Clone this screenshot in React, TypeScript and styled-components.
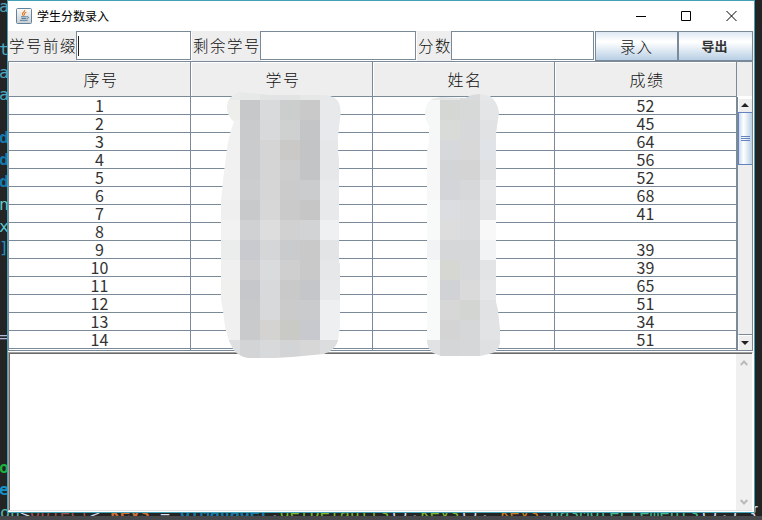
import React from 'react';
import styled, { createGlobalStyle } from 'styled-components';

const line = '#7a8a99';
const cjk = '"Noto Sans CJK SC", sans-serif';

const GlobalStyle = createGlobalStyle`
  * { box-sizing: border-box; }
  body { margin: 0; overflow: hidden; background: #242424; }
`;

const Desktop = styled.main`
  position: relative;
  width: 762px;
  height: 520px;
  overflow: hidden;
  padding-left: 7px;
  background: linear-gradient(#242424 0 516px, #47484b 516px);
  font-family: ${cjk};
`;

const CodeText = styled.span<{ $x: number; $y: number; $color: string; $bold?: boolean }>`
  position: absolute;
  left: ${p => p.$x}px;
  top: ${p => p.$y}px;
  font: ${p => (p.$bold ? 'bold' : 'normal')} 16.6px/22px "DejaVu Sans Mono", monospace;
  color: ${p => p.$color};
  white-space: pre;
`;

const CodeLine = styled.div`
  position: absolute;
  left: 0;
  top: 502px;
  width: 762px;
  height: 14px;
  overflow: hidden;
  font: 16.6px/22px "DejaVu Sans Mono", monospace;
  white-space: pre;
`;

const Token = styled.span<{ $color: string; $bold?: boolean }>`
  color: ${p => p.$color};
  font-weight: ${p => (p.$bold ? 'bold' : 'normal')};
`;

const Window = styled.section`
  position: relative;
  display: flex;
  flex-direction: column;
  width: 748px;
  height: 513px;
  border: 1px solid #43a0b5;
  background: #fff;
`;

const TitleBar = styled.header`
  display: flex;
  align-items: center;
  height: 30px;
  flex: none;
  padding: 0 0.5px 0 8px;
  background: #fff;
`;

const Title = styled.h1`
  flex: 1;
  margin: 0 0 0 5px;
  font-size: 12px;
  line-height: 18px;
  font-weight: 400;
  color: #000;
`;

const WindowButton = styled.button`
  display: flex;
  align-items: center;
  justify-content: center;
  width: 45px;
  height: 29px;
  padding: 0;
  border: 0;
  background: transparent;
`;

const Toolbar = styled.div`
  display: flex;
  height: 30px;
  flex: none;
  background: #eee;
`;

const FieldLabel = styled.label<{ $width: number }>`
  width: ${p => p.$width}px;
  padding-left: 1px;
  font-size: 15.5px;
  font-weight: 300;
  letter-spacing: 1.5px;
  line-height: 29px;
  white-space: nowrap;
  color: #111;
`;

const Field = styled.div<{ $width: number }>`
  display: flex;
  width: ${p => p.$width}px;
  height: 29px;
  border: 1px solid ${line};
  background: #fff;
  padding: 4px 1px;
  box-shadow: 1px 1px #fff;
`;

const Caret = styled.i`
  width: 1px;
  height: 20px;
  background: #222;
`;

const ActionButton = styled.button<{ $width: number; $bold?: boolean }>`
  width: ${p => p.$width}px;
  height: 30px;
  padding: 0 0 1px;
  border: 1px solid ${line};
  border-left-width: ${p => (p.$bold ? 0 : 1)}px;
  border-right-width: ${p => (p.$bold ? 1 : 2)}px;
  background: linear-gradient(#dde8f3 0%, #fff 33%, #fff 36%, #b8cfe5 100%);
  font-family: ${cjk};
  font-size: ${p => (p.$bold ? 13 : 15.5)}px;
  font-weight: ${p => (p.$bold ? 700 : 300)};
  letter-spacing: ${p => (p.$bold ? 0 : 1)}px;
  padding-right: ${p => (p.$bold ? 2 : 0)}px;
  color: ${p => (p.$bold ? '#333' : '#111')};
`;

const Spacer = styled.span<{ $width: number }>`
  width: ${p => p.$width}px;
  flex: none;
`;

const TablePane = styled.div`
  display: flex;
  height: 290px;
  flex: none;
  width: 745px;
  border: 1px solid ${line};
`;

const Grid = styled.div`
  width: 728px;
  height: 288px;
  overflow: hidden;
`;

const HeadRow = styled.div`
  display: grid;
  grid-template-columns: repeat(4, 182px);
  height: 35px;
`;

const HeadCell = styled.div`
  border: solid ${line};
  border-width: 0 1px 1px 0;
  background: #eee;
  box-shadow: inset 1px 1px #fff;
  text-align: center;
  padding-left: 3px;
  font-size: 16px;
  letter-spacing: 1.5px;
  font-weight: 300;
  line-height: 34px;
  color: #111;
`;

const Row = styled.div`
  display: grid;
  grid-template-columns: repeat(4, 182px);
  height: 18px;
`;

const Cell = styled.div`
  border: solid ${line};
  border-width: 0 1px 1px 0;
  text-align: center;
  font-size: 16px;
  line-height: 17px;
  font-weight: 400;
  color: #333;
  overflow: hidden;
`;

const TailRow = styled(Row)`
  height: 1px;
`;

const TailCell = styled.div`
  border-right: 1px solid ${line};
`;

const ScrollColumn = styled.div`
  display: flex;
  flex-direction: column;
  width: 15px;
  height: 288px;
`;

const ScrollCorner = styled.div`
  height: 35px;
  background: #eee;
  border-bottom: 1px solid #fff;
`;

const ScrollTrack = styled.div`
  display: flex;
  flex-direction: column;
  height: 253px;
  border-left: 1px solid ${line};
  background: #eee;
`;

const ArrowBox = styled.div<{ $down?: boolean }>`
  display: flex;
  align-items: center;
  justify-content: center;
  height: ${p => (p.$down ? 16 : 15)}px;
  margin-top: ${p => (p.$down ? 'auto' : '0')};
  padding-right: 2px;
  border-left: 1px solid #fff;
  border-top: 1px solid ${p => (p.$down ? line : '#fff')};
  box-shadow: inset 0 1px #fff;
`;

const Thumb = styled.div`
  display: flex;
  flex-direction: column;
  justify-content: center;
  gap: 1px;
  height: 53px;
  padding: 0 2px;
  border: 1px solid #6382bf;
  border-right: 0;
  background: linear-gradient(90deg, #c8daec, #fff 35%, #b8cfe5);
`;

const Grip = styled.i`
  height: 1px;
  background: #6382bf;
`;

const TextPane = styled.div`
  display: flex;
  justify-content: flex-end;
  width: 745px;
  height: 159px;
  margin-top: 1px;
  border: solid;
  border-width: 1px;
  border-color: #a0a0a0 #fff #e3e3e3 #a0a0a0;
  box-shadow: inset 1px 1px #696969;
`;

const PlainScroll = styled.div`
  display: flex;
  flex-direction: column;
  justify-content: space-between;
  align-items: center;
  width: 16px;
  margin-top: 1px;
  padding: 6px 0 5px;
  background: #f0f0f0;
`;

const Mask = styled.svg`
  position: absolute;
  left: 210px;
  top: 85px;
  pointer-events: none;
`;

const scores = ['52', '45', '64', '56', '52', '68', '41', '', '39', '39', '65', '51', '34', '51'];

const edgeCode: [string, number, string, boolean?][] = [
  ['a', -4, '#4e9fb4'], ['t', 39, '#4aa9c0'], ['a', 62, '#4aa9c0'], ['a', 84, '#4aa9c0'],
  ['d', 127, '#1479ad', true], ['d', 149, '#1479ad', true], ['d', 171, '#1479ad', true],
  ['n', 194, '#66c9bf'], ['x', 216, '#5cc4d0'], [']', 237, '#258bc0'],
  ['=', 326, '#b4b9dc'], ['o', 457, '#1db13c', true], ['e', 479, '#1591c9', true],
];

// Mosaic tile colours, 20px squares listed from the top row down.
const idTiles = [
  ['#e9ebea', '#e6e9e8', '#e1e4e3', '#e1e4e3', '#e6e8e8', '#e6e8e9'],
  ['#eeefed', '#c7c8ca', '#d8dadc', '#cccecd', '#c9c9c9', '#e7e9eb'],
  ['#f1f1f1', '#c9cacc', '#d7d9db', '#cfd1d0', '#c4c5c7', '#e7e9ec'],
  ['#f1f1f1', '#cacbcd', '#d5d5d5', '#cac9c7', '#c3c4c6', '#e6e7e9'],
  ['#f1f1f1', '#cacbcd', '#d5d5d5', '#cdcdce', '#c3c4c6', '#e6e7e9'],
  ['#f1f1f1', '#cccdcf', '#d6d6d6', '#cbcbcc', '#cbcccd', '#e8eaec'],
  ['#efefef', '#c8c9cb', '#d7d7d7', '#cacaca', '#c6c6c6', '#e7e9eb'],
  ['#f2f2f2', '#d0d1d3', '#dddddd', '#d1d1d1', '#d2d3d5', '#eff0f2'],
  ['#eaedec', '#c9cacf', '#d5d6d8', '#cacbcd', '#c9c9c9', '#e3e4e6'],
  ['#f0f0f0', '#ceced0', '#dadbdd', '#cfcfcf', '#c9c9c9', '#e6e7e9'],
  ['#f0f0ee', '#c6c7ca', '#d7d9db', '#c9c9c9', '#c5c6c9', '#e7e9eb'],
  ['#f0f0f0', '#c8c9cb', '#d7d9db', '#cbcbcb', '#cacbcd', '#eeeff1'],
  ['#f0f0f0', '#c9cacc', '#d4d3d1', '#c9c9c6', '#c8c9ce', '#eeeff1'],
  ['#dedfe1', '#d3d4d6', '#d8d9db', '#d3d4d6', '#d7d7d8', '#dcddde'],
];
const nameTiles = [
  ['#e6e9e8', '#e3e5e6', '#d8dadb', '#e5e7e9'],
  ['#f6f8f8', '#d5d7d5', '#d7d9d9', '#e3e5e7'],
  ['#f6f8f8', '#d9dbd9', '#d7d8d9', '#e1e2e4'],
  ['#f7f7f7', '#d7d8db', '#d8d8d8', '#e0e4e8'],
  ['#f7f7f7', '#d3d4d6', '#d4d4d4', '#e0e1e3'],
  ['#f7f7f7', '#d4d5d8', '#d7d8da', '#e6e7e9'],
  ['#f8f9f9', '#dcdde0', '#dadbdd', '#e4e5e7'],
  ['#f8faf9', '#dddddd', '#dadbdd', '#f8f8f8'],
  ['#f1f3f5', '#d6d7d9', '#d6d7d9', '#f2f3f5'],
  ['#f8faf9', '#d6d6d2', '#d7d8da', '#e3e4e6'],
  ['#f8faf9', '#d1d2d5', '#dadada', '#e5e6e8'],
  ['#f8faf9', '#d7d7d7', '#d3d5d3', '#e1e2e4'],
  ['#f8faf9', '#d4d4d4', '#d6d7d9', '#e2e3e5'],
  ['#e1e2e4', '#d5d6d8', '#d6d7d9', '#dfe0e2'],
];

function Tiles({ tiles, x, clip }: { tiles: string[][]; x: number; clip: string }) {
  return (
    <g clipPath={`url(#${clip})`} shapeRendering="crispEdges">
      {tiles.map((row, r) => row.map((fill, c) => (
        <rect key={`${r}-${c}`} x={x + c * 20} y={80 + r * 20} width={c === row.length - 1 ? 24 : 20} height="20" fill={fill} />
      )))}
    </g>
  );
}

function JavaIcon() {
  return (
    <svg width="16" height="16" viewBox="0 0 16 16" fill="none">
      <defs>
        <linearGradient id="cup" x1="0" y1="0" x2="0" y2="1">
          <stop stopColor="#fafafa" /><stop offset="1" stopColor="#c8cdd2" />
        </linearGradient>
      </defs>
      <rect x=".5" y=".5" width="15" height="15" rx="1" fill="url(#cup)" stroke="#63839b" />
      <path d="M8.7 2C9.3 4 5.4 4.6 6.5 6.3L7.6 8M10.3 4.2C8.2 5.1 7.8 6 8.7 7.3" stroke="#e97919" strokeWidth="1.1" />
      <path d="M5 8.8h5.7M5.5 10.5h4.8M4 12.3h7.5M10.8 8.8c2.4-.5 2.2 1.6.2 2.1" stroke="#527b9c" />
    </svg>
  );
}

export default function App() {
  return (
    <Desktop>
      <GlobalStyle />
      {edgeCode.map(([text, y, color, bold]) => (
        <CodeText key={y} $x={-1} $y={y} $color={color} $bold={bold}>{text}</CodeText>
      ))}
      <CodeLine>
        <Token $color="#54b9ad">on</Token>
        <Token $color="#c9d5e2">{'<'}</Token>
        <Token $color="#9a5148">Object</Token>
        <Token $color="#c9d5e2">{'> '}</Token>
        <Token $color="#cc6d32" $bold>keys</Token>
        <Token $color="#d8dce8">{' = '}</Token>
        <Token $color="#1579a8" $bold>UIManager</Token>
        <Token $color="#d8dce8">.</Token>
        <Token $color="#79b82b">getDefaults</Token>
        <Token $color="#d8dce8">().</Token>
        <Token $color="#79b82b">keys</Token>
        <Token $color="#d8dce8">{'(); '}</Token>
        <Token $color="#c97a20">keys</Token>
        <Token $color="#d8dce8">.</Token>
        <Token $color="#43b98a">hasMoreElements</Token>
        <Token $color="#d8dce8">{'();) {'}</Token>
      </CodeLine>
      <Window>
        <TitleBar>
          <JavaIcon />
          <Title>学生分数录入</Title>
          <WindowButton aria-label="最小化">
            <svg width="10" height="10"><path d="M0 5.5h10" stroke="#000" /></svg>
          </WindowButton>
          <WindowButton aria-label="最大化">
            <svg width="10" height="10"><path d="M.5 .5h9v9h-9z" fill="none" stroke="#000" /></svg>
          </WindowButton>
          <WindowButton aria-label="关闭">
            <svg width="11" height="10"><path d="M.5 0l10 10M10.5 0L.5 10" stroke="#000" /></svg>
          </WindowButton>
        </TitleBar>
        <Toolbar>
          <FieldLabel $width={68}>学号前缀</FieldLabel>
          <Field $width={115}><Caret /></Field>
          <Spacer $width={1} />
          <FieldLabel $width={68}>剩余学号</FieldLabel>
          <Field $width={156} />
          <Spacer $width={1} />
          <FieldLabel $width={34}>分数</FieldLabel>
          <Field $width={143} />
          <Spacer $width={1} />
          <ActionButton $width={84}>录入</ActionButton>
          <ActionButton $width={74} $bold>导出</ActionButton>
        </Toolbar>
        <TablePane>
          <Grid>
            <HeadRow>
              {['序号', '学号', '姓名', '成绩'].map(name => <HeadCell key={name}>{name}</HeadCell>)}
            </HeadRow>
            {scores.map((score, i) => (
              <Row key={i}>
                <Cell>{i + 1}</Cell><Cell /><Cell /><Cell>{score}</Cell>
              </Row>
            ))}
            <TailRow><TailCell /><TailCell /><TailCell /><TailCell /></TailRow>
          </Grid>
          <ScrollColumn>
            <ScrollCorner />
            <ScrollTrack>
              <ArrowBox>
                <svg width="8" height="4"><path d="M0 4L4 0l4 4z" fill="#222" /></svg>
              </ArrowBox>
              <Thumb><Grip /><Grip /><Grip /></Thumb>
              <ArrowBox $down>
                <svg width="8" height="4"><path d="M0 0h8L4 4z" fill="#222" /></svg>
              </ArrowBox>
            </ScrollTrack>
          </ScrollColumn>
        </TablePane>
        <TextPane>
          <PlainScroll>
            <svg width="8" height="6"><path d="M.7 5L4 1.5 7.3 5" fill="none" stroke="#bbb" strokeWidth="2" /></svg>
            <svg width="8" height="6"><path d="M.7 1L4 4.5 7.3 1" fill="none" stroke="#bbb" strokeWidth="2" /></svg>
          </PlainScroll>
        </TextPane>
      </Window>
      <Mask width="310" height="280" viewBox="210 85 310 280">
        <defs>
          <clipPath id="idShape">
            <path d="M240 92L250 93 260 94 268 95H325Q334 96 338 101Q342 108 340 119L338 136 338 150 339 160V262L340 264V326L338 341Q335 350 324 354L292 357 275 358H248Q239 357 233 349L229 341 225 327 223 311 221 300V202L223 180 225 164 228 142 231 130 234 122Q228 117 227 109Q226 102 231 97Q235 93 240 92Z" />
          </clipPath>
          <clipPath id="nameShape">
            <path d="M432 99L440 97 465 98 472 95 480 94 490 96Q498 102 499 113L497 126 496 135V302L498 310 500 330V343Q499 352 489 354L480 356H441L433 353Q427 348 427 341V152L429 141V126Q425 120 425 112Q425 103 432 99Z" />
          </clipPath>
        </defs>
        <Tiles tiles={idTiles} x={220} clip="idShape" />
        <Tiles tiles={nameTiles} x={420} clip="nameShape" />
      </Mask>
    </Desktop>
  );
}
